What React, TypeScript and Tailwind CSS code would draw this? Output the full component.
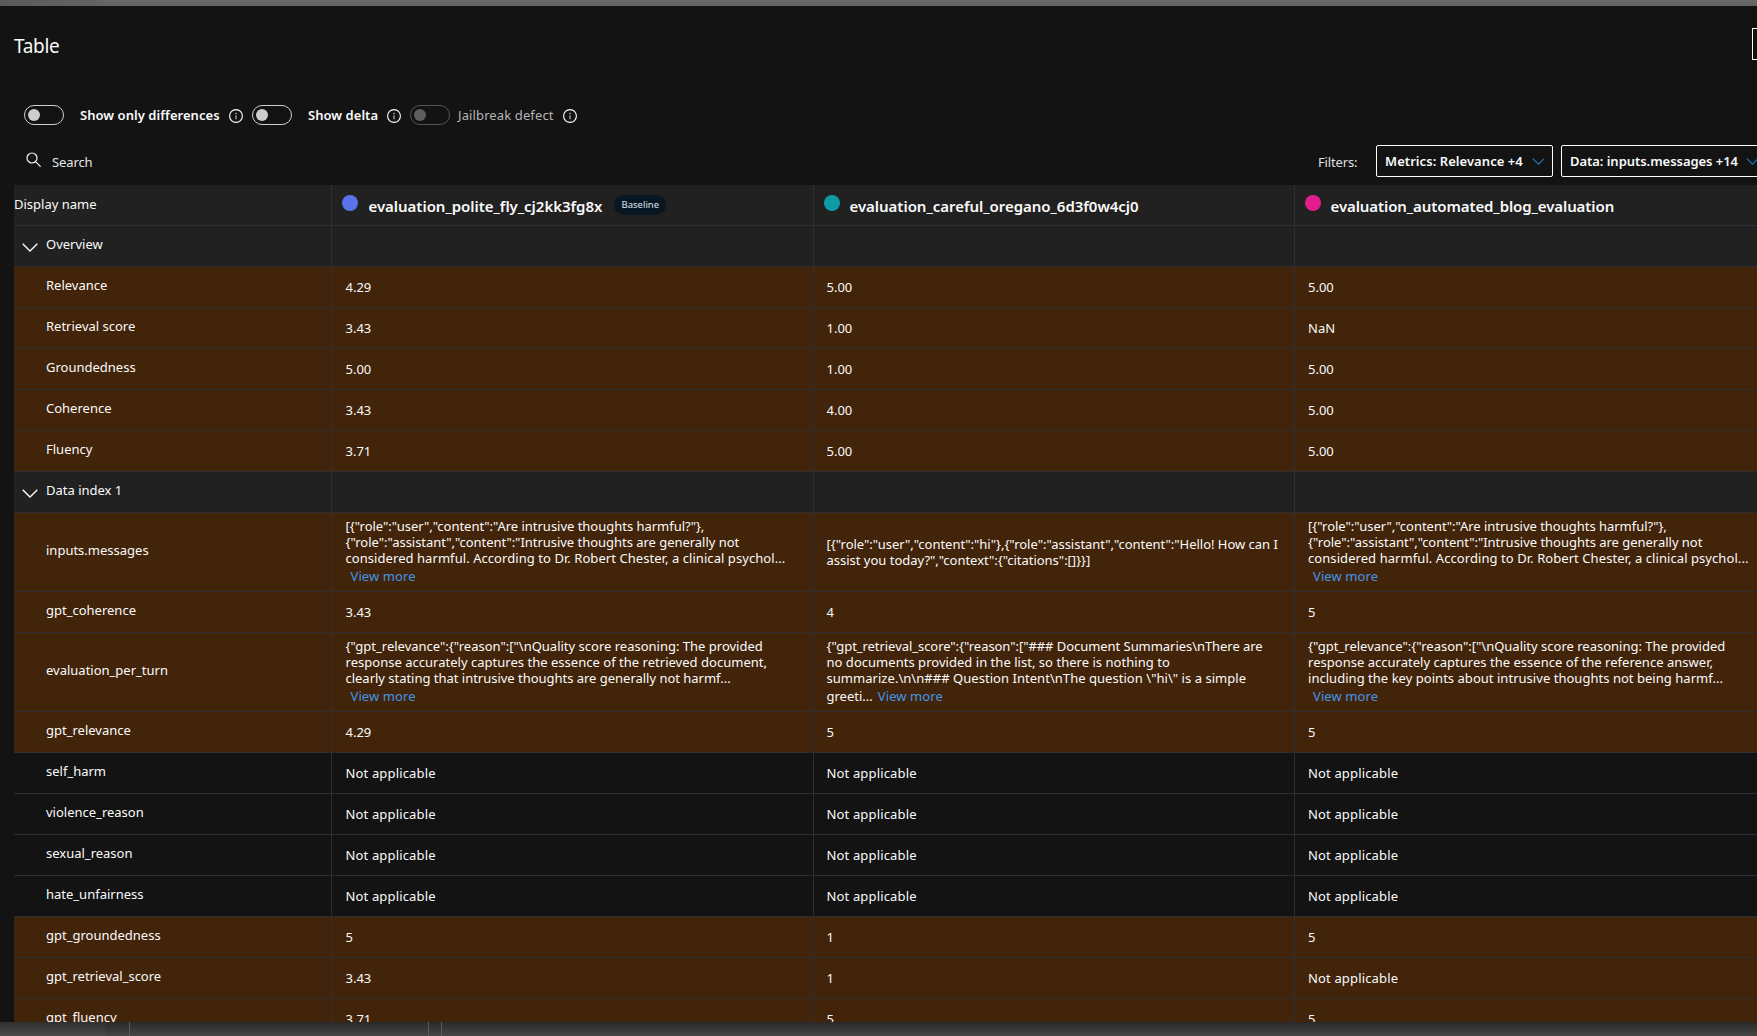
import type { ReactNode } from "react";

type Kind = "section" | "diff" | "same";
type Line = { text: string; track?: string };
type Cell = string | { lines: Line[]; more?: "inline" | "newline"; tail?: string };
type Row = { name: string; kind: Kind; tall?: boolean; cells: Cell[] };

const NA = "Not applicable";

const rows: Row[] = [
  { name: "Overview", kind: "section", cells: ["", "", ""] },
  { name: "Relevance", kind: "diff", cells: ["4.29", "5.00", "5.00"] },
  { name: "Retrieval score", kind: "diff", cells: ["3.43", "1.00", "NaN"] },
  { name: "Groundedness", kind: "diff", cells: ["5.00", "1.00", "5.00"] },
  { name: "Coherence", kind: "diff", cells: ["3.43", "4.00", "5.00"] },
  { name: "Fluency", kind: "diff", cells: ["3.71", "5.00", "5.00"] },
  { name: "Data index 1", kind: "section", cells: ["", "", ""] },
  {
    name: "inputs.messages",
    kind: "diff",
    tall: true,
    cells: [
      {
        lines: [
          { text: '[{"role":"user","content":"Are intrusive thoughts harmful?"},', track: "tracking-[-0.02px]" },
          { text: '{"role":"assistant","content":"Intrusive thoughts are generally not', track: "tracking-[-0.03px]" },
          { text: "considered harmful. According to Dr. Robert Chester, a clinical psychol...", track: "tracking-[0.06px]" },
        ],
        more: "newline",
      },
      {
        lines: [
          { text: '[{"role":"user","content":"hi"},{"role":"assistant","content":"Hello! How can I', track: "tracking-[-0.02px]" },
          { text: 'assist you today?","context":{"citations":[]}}]', track: "tracking-[-0.01px]" },
        ],
      },
      {
        lines: [
          { text: '[{"role":"user","content":"Are intrusive thoughts harmful?"},', track: "tracking-[-0.02px]" },
          { text: '{"role":"assistant","content":"Intrusive thoughts are generally not', track: "tracking-[-0.02px]" },
          { text: "considered harmful. According to Dr. Robert Chester, a clinical psychol...", track: "tracking-[0.07px]" },
        ],
        more: "newline",
      },
    ],
  },
  { name: "gpt_coherence", kind: "diff", cells: ["3.43", "4", "5"] },
  {
    name: "evaluation_per_turn",
    kind: "diff",
    tall: true,
    cells: [
      {
        lines: [
          { text: '{"gpt_relevance":{"reason":["\\nQuality score reasoning: The provided' },
          { text: "response accurately captures the essence of the retrieved document,", track: "tracking-[0.02px]" },
          { text: "clearly stating that intrusive thoughts are generally not harmf...", track: "tracking-[-0.02px]" },
        ],
        more: "newline",
      },
      {
        lines: [
          { text: '{"gpt_retrieval_score":{"reason":["### Document Summaries\\nThere are', track: "tracking-[-0.05px]" },
          { text: "no documents provided in the list, so there is nothing to", track: "tracking-[0.03px]" },
          { text: 'summarize.\\n\\n### Question Intent\\nThe question \\"hi\\" is a simple', track: "tracking-[0.04px]" },
        ],
        more: "inline",
        tail: "greeti...",
      },
      {
        lines: [
          { text: '{"gpt_relevance":{"reason":["\\nQuality score reasoning: The provided' },
          { text: "response accurately captures the essence of the reference answer,", track: "tracking-[0.02px]" },
          { text: "including the key points about intrusive thoughts not being harmf...", track: "tracking-[0.03px]" },
        ],
        more: "newline",
      },
    ],
  },
  { name: "gpt_relevance", kind: "diff", cells: ["4.29", "5", "5"] },
  { name: "self_harm", kind: "same", cells: [NA, NA, NA] },
  { name: "violence_reason", kind: "same", cells: [NA, NA, NA] },
  { name: "sexual_reason", kind: "same", cells: [NA, NA, NA] },
  { name: "hate_unfairness", kind: "same", cells: [NA, NA, NA] },
  { name: "gpt_groundedness", kind: "diff", cells: ["5", "1", "5"] },
  { name: "gpt_retrieval_score", kind: "diff", cells: ["3.43", "1", NA] },
  { name: "gpt_fluency", kind: "diff", cells: ["3.71", "5", "5"] },
];

const rowBg: Record<Kind, string> = {
  section: "bg-[#212121]",
  diff: "bg-[#42240b]",
  same: "bg-[#131313]",
};

const cellPad = ["pl-[13.5px]", "pl-[12.5px]", "pl-[13px]"];
const GRID = "grid w-[1762px] grid-cols-[318px_482px_481px_481px]";
const LINE = "border-[#2d2f30]";

function Chevron({ className }: { className: string }) {
  return (
    <svg viewBox="0 0 16 9" className={className} fill="none" stroke="currentColor">
      <path d="M0.7 0.8 8 8l7.3-7.2" strokeWidth="1.4" />
    </svg>
  );
}

function Info() {
  return (
    <svg viewBox="0 0 14 14" className="mt-px size-3.5 shrink-0 text-white" fill="none">
      <circle cx="7" cy="7" r="6.4" stroke="currentColor" strokeWidth="1.1" />
      <circle cx="7" cy="4.5" r="0.8" fill="#c4c4c4" />
      <path d="M7 6.2v4" stroke="#c4c4c4" strokeWidth="1.1" />
    </svg>
  );
}

function Toggle({ disabled }: { disabled?: boolean }) {
  return (
    <button
      className={`flex h-5 w-10 shrink-0 items-center rounded-full border pl-[3px] ${
        disabled ? "border-[#545454]" : "border-[#d0d0d0]"
      }`}
    >
      <span className={`size-3 rounded-full ${disabled ? "bg-[#5e5e5e]" : "bg-[#cdcdcd]"}`} />
    </button>
  );
}

function Dropdown({ children, className }: { children: ReactNode; className: string }) {
  return (
    <button
      className={`flex h-8 shrink-0 items-center rounded-[2px] border border-white pl-2 text-left font-semibold ${className}`}
    >
      {children}
    </button>
  );
}

function CellBody({ cell }: { cell: Cell }) {
  if (typeof cell === "string")
    return <span className={`leading-5 ${cell === NA ? "tracking-[0.15px]" : ""}`}>{cell}</span>;
  return (
    <div>
      {cell.lines.map((l) => (
        <div key={l.text} className={`leading-4 ${l.track ?? ""}`}>
          {l.text}
        </div>
      ))}
      {cell.more && (
        <div className="leading-5">
          {cell.tail}
          <a className="ml-[5px] tracking-[0.1px] text-[#4296e8]">View more</a>
        </div>
      )}
    </div>
  );
}

const runs = [
  { name: "evaluation_polite_fly_cj2kk3fg8x", dot: "bg-[#5b73ea]", gap: "ml-[10.5px]", track: "tracking-[-0.03px]", baseline: true },
  { name: "evaluation_careful_oregano_6d3f0w4cj0", dot: "bg-[#0f9ba6]", gap: "ml-[9.5px]", track: "tracking-[-0.03px]" },
  { name: "evaluation_automated_blog_evaluation", dot: "bg-[#e21e8d]", gap: "ml-[9.5px]", track: "tracking-[-0.09px]" },
];

export default function App() {
  return (
    <div className="flex h-[1036px] w-[1757px] flex-col overflow-hidden whitespace-nowrap bg-[#131313] font-['Noto_Sans',sans-serif] text-[13px] leading-5 text-[#fafafa]">
      <div className="flex h-1.5 shrink-0 bg-linear-to-b from-[#6a6a6a] to-[#626262]">
        <div className="w-[104px] rounded-tr-sm bg-linear-to-r from-[#5a5a5a] to-[#636363]" />
      </div>

      <main className="flex h-[1016px] shrink-0 flex-col overflow-hidden pl-3.5">
        <header className="flex h-[99px] shrink-0 items-start justify-between pt-[22px]">
          <h1 className="pt-1 text-[19px] leading-7 tracking-[-0.3px]">Table</h1>
          <button className="h-8 w-[5px] border border-r-0 border-white" />
        </header>

        <div className="flex h-5 shrink-0 items-center pl-2.5">
          <Toggle />
          <span className="ml-4 w-[149px] font-semibold tracking-[0.04px]">Show only differences</span>
          <Info />
          <span className="w-[9px]" />
          <Toggle />
          <span className="ml-4 w-[79px] font-semibold tracking-[0.04px]">Show delta</span>
          <Info />
          <span className="w-[9px]" />
          <Toggle disabled />
          <span className="ml-[8px] w-[105px] tracking-[0.12px] text-[#b5b5b5]">Jailbreak defect</span>
          <Info />
        </div>

        <div className="mt-5 flex h-8 w-[1800px] shrink-0 items-center">
          <svg viewBox="0 0 15 15" className="mb-[3px] ml-3 size-[15px] shrink-0" fill="none" stroke="currentColor" strokeWidth="1.2">
            <circle cx="6" cy="6" r="5" />
            <path d="m9.6 9.6 5 5" />
          </svg>
          <span className="ml-[11px] mt-px w-[1266px] tracking-[-0.1px] text-[#e6e6e6]">Search</span>
          <span className="mt-px w-[58px] tracking-[-0.15px] text-[#e0e0e0]">Filters:</span>
          <Dropdown className="w-[177px]">
            <span className="w-[147px] tracking-[0.06px]">Metrics: Relevance +4</span>
            <Chevron className="h-[7px] w-[13px] text-[#2376bd]" />
          </Dropdown>
          <Dropdown className="ml-2 w-[210px]">
            <span className="w-[176px] tracking-[-0.04px]">Data: inputs.messages +14</span>
            <Chevron className="h-[7px] w-[13px] text-[#2376bd]" />
          </Dropdown>
        </div>

        <section className="mt-2 shrink-0">
          <div className={`${GRID} h-[41px] bg-[#212121]`}>
            <div className={`border-b border-r pt-[9px] ${LINE}`}>Display name</div>
            {runs.map((r) => (
              <div key={r.name} className={`flex items-start border-b border-r pl-[10px] ${LINE}`}>
                <span className={`mt-2.5 size-4 shrink-0 rounded-full ${r.dot}`} />
                <span className={`mt-[11px] text-[15px] font-semibold ${r.gap} ${r.track}`}>{r.name}</span>
                {r.baseline && (
                  <span className="ml-[12px] mt-2.5 flex h-5 w-[52px] items-center justify-center rounded-full bg-[#081722] text-[9.5px] text-[#dce6ee]">
                    Baseline
                  </span>
                )}
              </div>
            ))}
          </div>

          {rows.map((row) => (
            <div key={row.name} className={`${GRID} ${row.tall ? "h-[79px]" : "h-[41px]"} ${rowBg[row.kind]}`}>
              <div className={`flex items-center border-b border-r pb-1 ${LINE}`}>
                <span className="flex w-8 pl-2">
                  {row.kind === "section" && <Chevron className="mt-1.5 h-[9px] w-4" />}
                </span>
                <span>{row.name}</span>
              </div>
              {row.cells.map((cell, i) => (
                <div key={i} className={`flex items-center border-b border-r ${cellPad[i]} ${LINE}`}>
                  <CellBody cell={cell} />
                </div>
              ))}
            </div>
          ))}
        </section>
      </main>

      <footer className="flex h-3.5 shrink-0 bg-linear-to-b from-[#292929] to-[#464646]">
        <div className="w-[105px] bg-white/3" />
        <div className="w-[25px] border-r border-[#5a5a5a]" />
        <div className="w-[299px] border-r border-[#5a5a5a]" />
        <div className="w-[13px] border-r border-[#5a5a5a]" />
      </footer>
    </div>
  );
}
